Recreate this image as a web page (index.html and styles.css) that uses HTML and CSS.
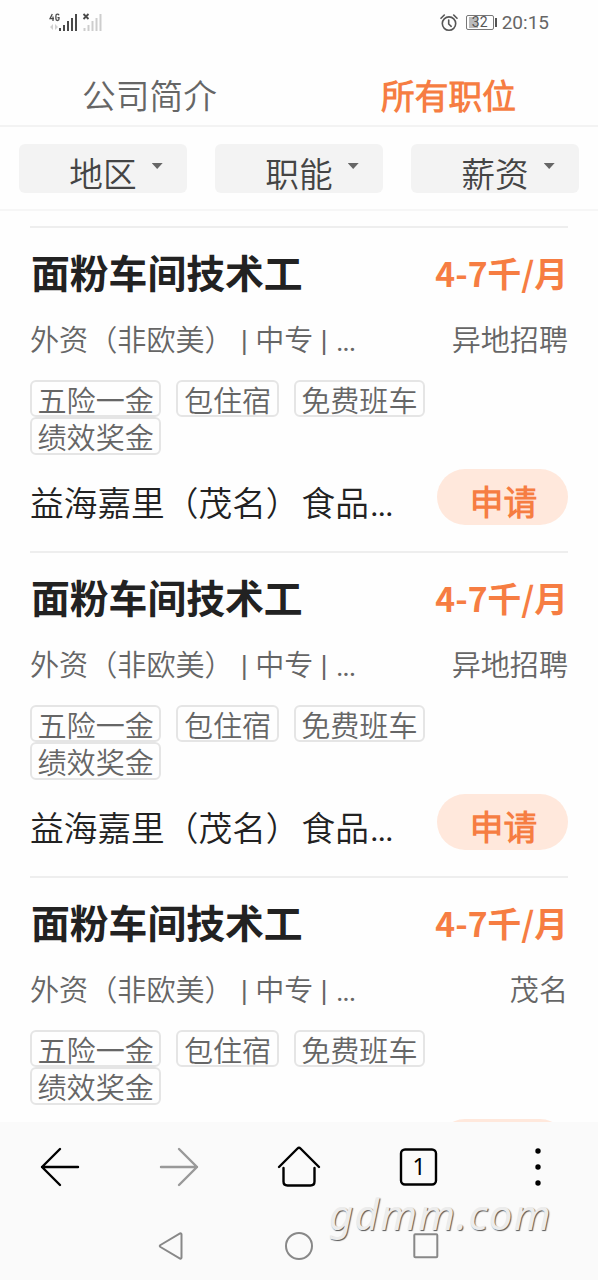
FILE: index.html
```html
<!DOCTYPE html>
<html lang="zh-CN">
<head>
<meta charset="utf-8">
<title>所有职位</title>
<link rel="stylesheet" href="styles.css">
</head>
<body>
<div class="screen">
  <header class="status">
    <svg class="signal" width="56" height="20" viewBox="0 0 56 20">
      <g fill="none" stroke="#4a4a4a" stroke-width="1.3"><path d="M3.3 1 1 5.7H5M4 3.5V8M10 2.2Q9.600 1.200 8.400 1.200 6.900 1.200 6.900 3V5.800Q6.900 7.500 8.400 7.500 10 7.500 10 6V4.700H8.500"/></g>
      <path d="M4 11 1 14l3 3zM6 11l3 3-3 3z" fill="#d0d0d0"/>
      <path d="M10 15h2v3h-2zM14 12h2v6h-2zM18 8h2v10h-2zM22 5h2v13h-2zM26 1h2v17h-2z" fill="#4a4a4a"/>
      <path d="m34.500 1 5 5m0-5-5 5" stroke="#4a4a4a" stroke-width="1.800"/>
      <path d="M34.500 15h2v3h-2zM38.500 12h2v6h-2zM42.500 8h2v10h-2zM46.500 5h2v13h-2zM50.500 1h2v17h-2z" fill="#cdcdcd"/>
    </svg>
    <div class="status-right">
      <svg width="18" height="18" viewBox="0 0 18 18" fill="none" stroke="#555" stroke-width="1.600" stroke-linecap="round"><circle cx="9" cy="9.600" r="6.700"/><path d="M8.700 6v4l2.500 2.300M1 4.300 4.300 1M17 4.300 13.700 1"/></svg>
      <span class="battery">32</span>
      <span class="clock">20:15</span>
    </div>
  </header>
  <nav class="tabs">
    <a class="tab">公司简介</a>
    <a class="tab active">所有职位</a>
  </nav>
  <div class="filters">
    <div class="filter">地区<i class="caret"></i></div>
    <div class="filter">职能<i class="caret"></i></div>
    <div class="filter">薪资<i class="caret"></i></div>
  </div>
  <main class="jobs">
    <article class="job">
      <div class="head"><h2 class="title">面粉车间技术工</h2><span class="pay">4-7千/月</span></div>
      <div class="meta"><span>外资（非欧美）<span class="latin"> | </span>中专<span class="latin"> | </span><span class="latin dots">...</span></span><span>异地招聘</span></div>
      <div class="tags"><span class="tag">五险一金</span><span class="tag">包住宿</span><span class="tag">免费班车</span><span class="tag">绩效奖金</span></div>
      <div class="foot"><span class="company">益海嘉里（茂名）<span class="name-end">食品</span><span class="latin dots">...</span></span><a class="apply">申请</a></div>
    </article>
    <article class="job">
      <div class="head"><h2 class="title">面粉车间技术工</h2><span class="pay">4-7千/月</span></div>
      <div class="meta"><span>外资（非欧美）<span class="latin"> | </span>中专<span class="latin"> | </span><span class="latin dots">...</span></span><span>异地招聘</span></div>
      <div class="tags"><span class="tag">五险一金</span><span class="tag">包住宿</span><span class="tag">免费班车</span><span class="tag">绩效奖金</span></div>
      <div class="foot"><span class="company">益海嘉里（茂名）<span class="name-end">食品</span><span class="latin dots">...</span></span><a class="apply">申请</a></div>
    </article>
    <article class="job">
      <div class="head"><h2 class="title">面粉车间技术工</h2><span class="pay">4-7千/月</span></div>
      <div class="meta"><span>外资（非欧美）<span class="latin"> | </span>中专<span class="latin"> | </span><span class="latin dots">...</span></span><span>茂名</span></div>
      <div class="tags"><span class="tag">五险一金</span><span class="tag">包住宿</span><span class="tag">免费班车</span><span class="tag">绩效奖金</span></div>
      <div class="foot"><span class="company"></span><a class="apply"></a></div>
    </article>
  </main>
  <footer class="bottom">
    <div class="toolbar">
      <svg width="44" height="44" viewBox="0 0 44 44" class="icon"><path d="M40 22H4M22 4 4 22l18 18"/></svg>
      <svg width="44" height="44" viewBox="0 0 44 44" class="icon muted"><path d="M4 22h36M22 4l18 18-18 18"/></svg>
      <svg width="44" height="44" viewBox="0 0 44 44" class="icon"><path d="M2 22 20.500 3.500Q22 2 23.500 3.500L42 22M6.500 23v13.500q0 4 4 4h23q4 0 4-4V23"/></svg>
      <svg width="44" height="44" viewBox="0 0 44 44" class="icon"><rect x="4" y="4.500" width="35" height="35" rx="4"/><text x="22" y="30" text-anchor="middle" class="count">1</text></svg>
      <svg width="44" height="44" viewBox="0 0 44 44"><circle cx="22" cy="6" r="2.700"/><circle cx="22" cy="22" r="2.700"/><circle cx="22" cy="38" r="2.700"/></svg>
    </div>
    <div class="system">
      <svg width="30" height="30" viewBox="0 0 30 30"><path d="M3.500 14 23 2.500q1.500-.5 1.500 1v23q0 1.500-1.500 1L3.500 16q-1.500-1 0-2z"/></svg>
      <svg width="30" height="30" viewBox="0 0 30 30"><circle cx="15" cy="15" r="13"/></svg>
      <svg width="30" height="30" viewBox="0 0 30 30"><rect x="3.300" y="3.300" width="23" height="23" rx="1"/></svg>
    </div>
    <span class="watermark">gdmm.com</span>
  </footer>
</div>
</body>
</html>
```

FILE: styles.css
```css
* { box-sizing: border-box; }
body { margin: 0; background: #fefefe; font-family: "Noto Sans CJK SC DemiLight", "Noto Sans CJK SC", sans-serif; font-weight: 350; }
.screen { display: flex; flex-direction: column; width: 598px; height: 1280px; overflow: hidden; }
.status { display: flex; justify-content: space-between; align-items: center; flex: none; height: 45px; padding: 0 49px; }
.status-right { display: flex; align-items: center; gap: 8px; }
.status-right svg { flex: none; }
.battery { position: relative; width: 28px; height: 15px; border: 1px solid #777; border-radius: 2px; background: linear-gradient(90deg, #bbb 9px, transparent 9px) 2px 1px / 23px 11px no-repeat; font: 14px/13px Roboto, sans-serif; color: #555; text-align: center; }
.battery::after { content: ""; position: absolute; right: -4px; top: 2px; width: 2px; height: 9px; background: #555; }
.clock { font: 19px/24px Roboto, sans-serif; color: #666; }
.tabs { display: flex; flex: none; height: 82px; border-bottom: 2px solid #f3f3f3; }
.tab { flex: 1; text-align: center; font-size: 33.7px; line-height: 99px; color: #666; }
.tab.active { font-weight: 700; color: #f67d42; }
.filters { display: flex; flex: none; gap: 28px; height: 84px; padding: 17px 19px; border-bottom: 2px solid #f6f6f6; }
.filter { display: flex; flex: 1; justify-content: center; gap: 15px; height: 49px; padding-left: 26px; border-radius: 6px; background: #f3f3f3; color: #444; font-size: 33.7px; line-height: 58px; }
.caret { width: 11px; height: 6px; margin-top: 19px; background: #666; clip-path: polygon(0 0, 100% 0, 50% 100%); }
.jobs { flex: 1; min-height: 0; overflow: hidden; padding: 15px 30px 0; }
.job { height: 325px; border-top: 2px solid #eee; }
.head { display: flex; justify-content: space-between; height: 90px; line-height: 89px; }
.title { margin: 0; padding-left: 1px; font-family: "Noto Sans CJK SC", sans-serif; font-size: 38.8px; font-weight: 700; line-height: 86px; color: #222; }
.pay { font-family: "Noto Sans CJK SC", sans-serif; font-size: 33.7px; font-weight: 700; color: #f67d42; }
.meta { display: flex; justify-content: space-between; height: 62px; color: #666; font-size: 29.1px; line-height: 40px; white-space: nowrap; }
.latin { font-family: Roboto, sans-serif; font-weight: 400; line-height: 0; white-space: pre; }
.dots { margin-left: 1px; letter-spacing: -1.300px; }
.tags { display: flex; flex-wrap: wrap; column-gap: 15px; width: 440px; }
.tag { height: 37.300px; padding: 0 5.500px; border: 2px solid #e5e5e5; border-radius: 6px; color: #666; font-size: 29.1px; line-height: 35px; white-space: nowrap; }
.foot { display: flex; justify-content: space-between; margin-top: 14.900px; height: 56px; }
.company { font-size: 33.7px; line-height: 66px; color: #222; white-space: nowrap; }
.name-end { margin-left: 2px; }
.apply { width: 131px; height: 56px; padding-left: 2px; border-radius: 28px; background: #ffe8dc; color: #f67d42; text-align: center; font-size: 33.7px; font-weight: 700; line-height: 64px; }
.bottom { position: relative; flex: none; height: 158px; background: #fafafa; }
.toolbar { display: grid; grid-template-columns: repeat(5, 1fr); justify-items: center; height: 67px; padding-top: 23px; }
.icon { fill: none; stroke: #000; stroke-width: 2.400; stroke-linecap: round; stroke-linejoin: round; }
.muted { stroke: #999; }
.count { fill: #000; stroke: none; font: 23px "Noto Sans", sans-serif; }
.system { display: flex; justify-content: center; gap: 97px; padding-top: 42px; }
.system svg { fill: none; stroke: #888; stroke-width: 2; }
.watermark { position: absolute; left: 329px; top: 62px; font: italic 42px/60px "Noto Sans", sans-serif; letter-spacing: 1.300px; color: #ececec; text-shadow: 1px 1px 1px #555; }
```
